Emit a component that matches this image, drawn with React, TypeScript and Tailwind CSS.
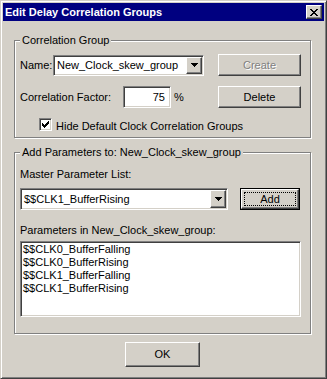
import React from 'react'

const raised =
  'border border-t-white border-l-white border-r-[#404040] border-b-[#404040] shadow-[inset_-1px_-1px_0_#808080] bg-[#d4d0c8]'
const sunken =
  'border border-t-[#808080] border-l-[#808080] border-r-white border-b-white shadow-[inset_1px_1px_0_#404040,inset_-1px_-1px_0_#d4d0c8] bg-white p-px'
const group = 'flex flex-col border border-[#808080] shadow-[inset_1px_1px_0_white,1px_1px_0_white] w-[297px]'
const groupLabel = 'self-start -mt-[7px] ml-[5px] px-[2px] leading-[13px] bg-[#d4d0c8]'

function Arrow() {
  return (
    <svg width="7" height="4" viewBox="0 0 7 4" shapeRendering="crispEdges">
      <path d="M0 0h7v1H0zM1 1h5v1H1zM2 2h3v1H2zM3 3h1v1H3z" fill="black" />
    </svg>
  )
}

function CloseGlyph() {
  return (
    <svg width="8" height="7" viewBox="0 0 8 7" shapeRendering="crispEdges">
      <path
        d="M0 0h2v1H0zM6 0h2v1H6zM1 1h2v1H1zM5 1h2v1H5zM2 2h4v1H2zM3 3h2v1H3zM2 4h4v1H2zM1 5h2v1H1zM5 5h2v1H5zM0 6h2v1H0zM6 6h2v1H6z"
        fill="black"
      />
    </svg>
  )
}

function CheckGlyph() {
  return (
    <svg width="7" height="7" viewBox="0 0 7 7" shapeRendering="crispEdges">
      <path
        d="M6 0h1v1H6zM5 1h2v1H5zM0 2h1v1H0zM4 2h3v1H4zM0 3h2v1H0zM3 3h3v1H3zM0 4h5v1H0zM1 5h3v1H1zM2 6h1v1H2z"
        fill="black"
      />
    </svg>
  )
}

function DropButton() {
  return (
    <div className={`${raised} w-[16px] h-full flex items-center justify-center`}>
      <Arrow />
    </div>
  )
}

export default function App() {
  const params = [
    '$$CLK0_BufferFalling',
    '$$CLK0_BufferRising',
    '$$CLK1_BufferFalling',
    '$$CLK1_BufferRising',
  ]

  return (
    <div className="w-[327px] h-[379px] bg-[#d4d0c8] border border-t-[#d4d0c8] border-l-[#d4d0c8] border-r-[#404040] border-b-[#404040] shadow-[inset_1px_1px_0_white,inset_-1px_-1px_0_#808080] p-[2px] font-['Liberation_Sans',Arial,sans-serif] text-[11px] text-black flex flex-col">
      {/* title bar */}
      <div className="h-[18px] bg-[#000080] flex items-center shrink-0">
        <span className="pl-[2px] font-bold text-white leading-[18px]">Edit Delay Correlation Groups</span>
        <div className={`${raised} ml-auto mr-[2px] w-[16px] h-[14px] flex items-center justify-center`}>
          <CloseGlyph />
        </div>
      </div>

      <div className="flex flex-col px-[11px]">
        {/* Correlation Group */}
        <div className={`${group} mt-[19px] h-[98px]`}>
          <span className={groupLabel}>Correlation Group</span>
          <div className="flex flex-col pl-[5px]">
            <div className="flex items-center w-[281px] h-[22px] mt-[7px]">
              <span className="w-[33px] leading-[13px]">Name:</span>
              <div className={`${sunken} flex w-[151px] h-[21px]`}>
                <span className="flex-1 pl-[2px] leading-[17px]">New_Clock_skew_group</span>
                <DropButton />
              </div>
              <div className={`${raised} ml-auto w-[83px] h-[22px] flex items-center justify-center text-[#808080] [text-shadow:1px_1px_0_white]`}>
                Create
              </div>
            </div>

            <div className="flex items-center w-[281px] h-[22px] mt-[10px]">
              <span className="w-[103px] leading-[13px]">Correlation Factor:</span>
              <div className={`${sunken} w-[48px] h-[22px] flex items-center justify-end pr-[5px]`}>75</div>
              <span className="ml-[3px]">%</span>
              <div className={`${raised} ml-auto w-[83px] h-[22px] flex items-center justify-center`}>Delete</div>
            </div>

            <div className="flex items-start h-[13px] mt-[10px] ml-[19px]">
              <div className={`${sunken} w-[13px] h-[13px] flex items-center justify-center`}>
                <CheckGlyph />
              </div>
              <span className="ml-[4px] mt-[2px] leading-[13px]">Hide Default Clock Correlation Groups</span>
            </div>
          </div>
        </div>

        {/* Add Parameters */}
        <div className={`${group} mt-[14px] h-[182px]`}>
          <span className={groupLabel}>Add Parameters to: New_Clock_skew_group</span>
          <div className="flex flex-col pl-[5px]">
            <span className="mt-[9px] leading-[13px]">Master Parameter List:</span>
            <div className="flex mt-[7px]">
              <div className={`${sunken} flex w-[208px] h-[22px]`}>
                <span className="flex-1 pl-[2px] leading-[18px]">$$CLK1_BufferRising</span>
                <DropButton />
              </div>
              <div className="ml-[12px] w-[60px] h-[22px] border border-black flex">
                <div className={`${raised} flex-1 flex`}>
                  <div className="flex-1 m-[2px] border border-dotted border-black flex items-center justify-center">
                    Add
                  </div>
                </div>
              </div>
            </div>
            <span className="mt-[14px] leading-[13px]">Parameters in New_Clock_skew_group:</span>
            <div className={`${sunken} mt-[4px] w-[281px] h-[76px] flex flex-col pl-[2px]`}>
              {params.map((p) => (
                <span key={p} className="leading-[13px]">
                  {p}
                </span>
              ))}
            </div>
          </div>
        </div>

        <div className={`${raised} mt-[8px] ml-[111px] w-[75px] h-[25px] flex items-center justify-center`}>OK</div>
      </div>
    </div>
  )
}
